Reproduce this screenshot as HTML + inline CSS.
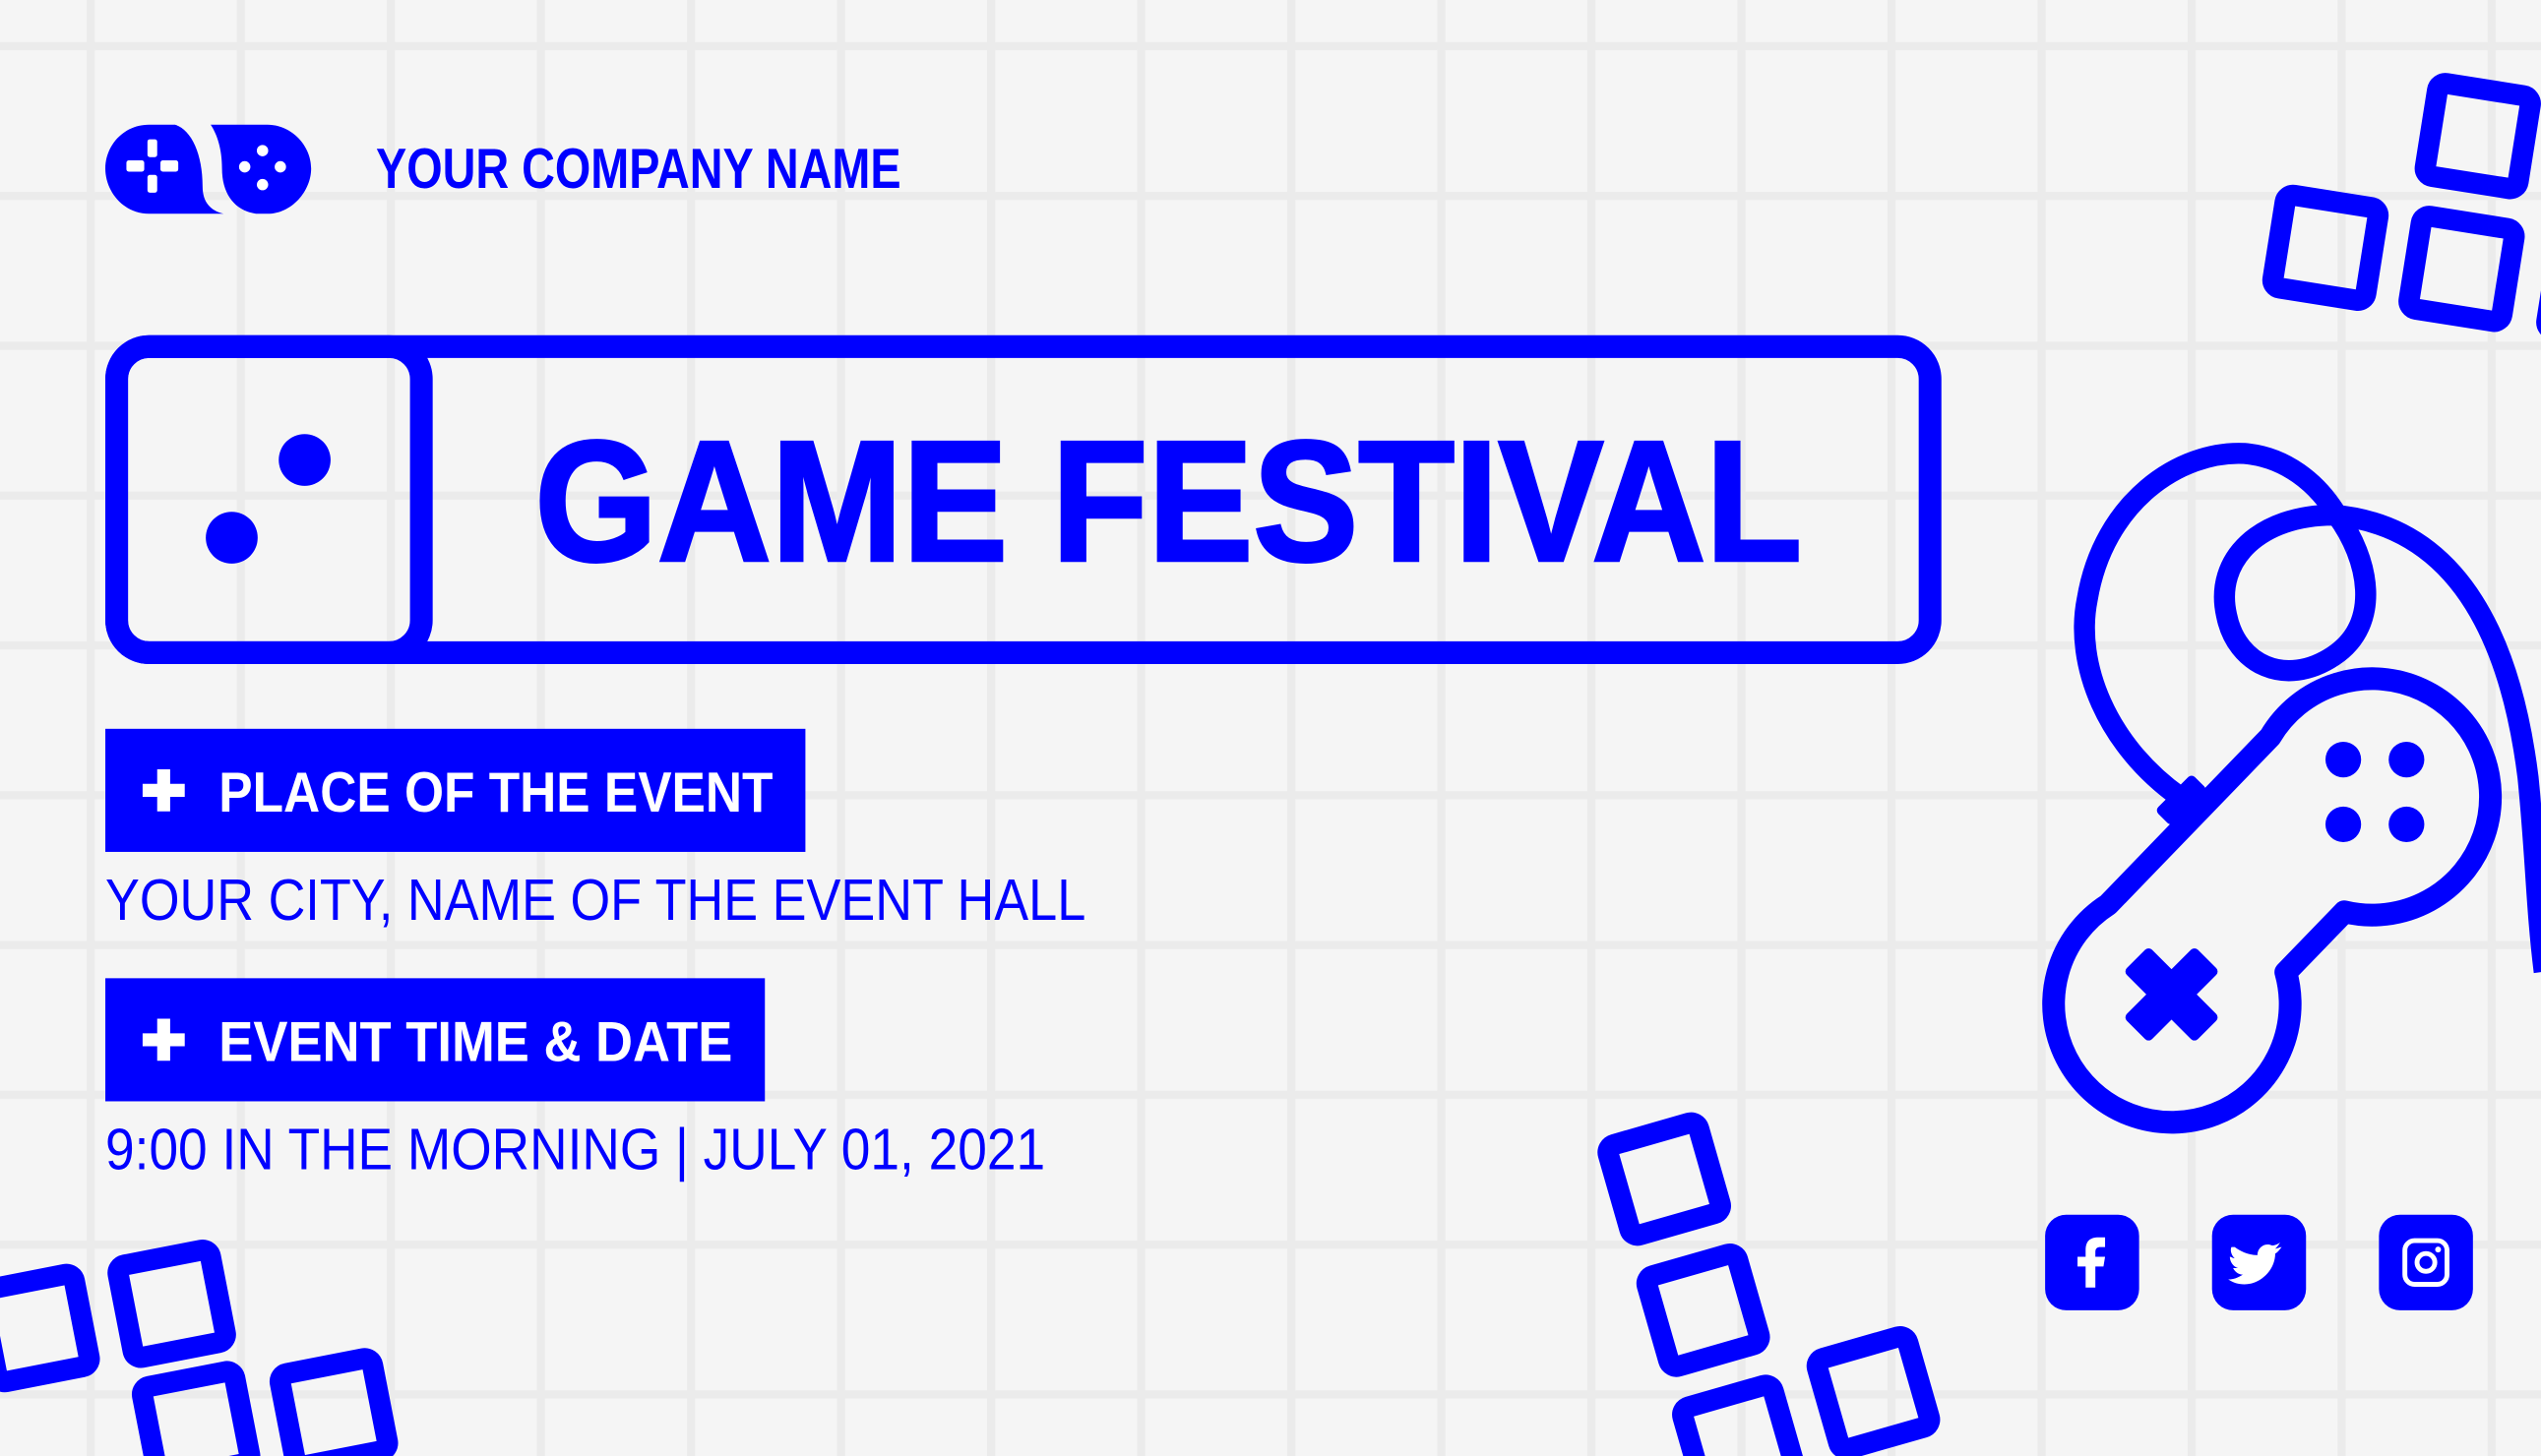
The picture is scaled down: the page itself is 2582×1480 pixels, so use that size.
<!DOCTYPE html>
<html><head><meta charset="utf-8"><style>
html,body{margin:0;padding:0;background:#f5f5f5;}
svg{display:block;}
</style></head><body>
<svg width="2582" height="1480" viewBox="0 0 1568 899" preserveAspectRatio="none" xmlns="http://www.w3.org/2000/svg">
<defs>
<pattern id="g" x="0" y="0" width="92.6" height="92.5" patternUnits="userSpaceOnUse" patternTransform="translate(53.5,26)">
<rect width="92.6" height="92.5" fill="#f5f5f5"/>
<rect x="0" y="0" width="5" height="92.5" fill="#ebebeb"/>
<rect x="0" y="0" width="92.6" height="5" fill="#ebebeb"/>
</pattern>
<rect id="sq" x="-29" y="-29" width="58" height="58" rx="5" fill="none" stroke="#0000ff" stroke-width="13"/>
</defs>
<rect width="1568" height="899" fill="url(#g)"/>

<!-- logo -->
<g fill="#0000ff">
<path d="M92,77 L108,77 C118,80 125,95 125,115 C125,125 130,130 138,132 L92,132 C76,132 65,118 65,104 C65,90 76,77 92,77 Z"/>
<path d="M130,77 L165,77 C180,77 192,90 192,104 C192,118 180,132 165,132 L158,132 C145,130 137,120 137,104 C137,92 134,83 130,77 Z"/>
</g>
<g fill="#fff">
<rect x="91" y="86" width="6" height="11" rx="1.5"/><rect x="91" y="108" width="6" height="11" rx="1.5"/>
<rect x="78" y="99" width="11" height="7" rx="1.5"/><rect x="99" y="99" width="11" height="7" rx="1.5"/>
<circle cx="162" cy="93" r="3.5"/><circle cx="162" cy="114" r="3.5"/><circle cx="151" cy="103" r="3.5"/><circle cx="173" cy="103" r="3.5"/>
</g>
<text x="232" y="116" font-family="Liberation Sans, sans-serif" font-weight="bold" font-size="35" fill="#0000ff" textLength="324" lengthAdjust="spacingAndGlyphs">YOUR COMPANY NAME</text>

<!-- main box -->
<rect x="72" y="214" width="1119" height="189" rx="20" fill="none" stroke="#0000ff" stroke-width="14"/>
<rect x="72" y="214" width="188" height="189" rx="20" fill="none" stroke="#0000ff" stroke-width="14"/>
<circle cx="188" cy="284" r="16" fill="#0000ff"/>
<circle cx="143" cy="332" r="16" fill="#0000ff"/>
<text x="330" y="346" font-family="Liberation Sans, sans-serif" font-weight="bold" font-size="106" fill="#0000ff" stroke="#0000ff" stroke-width="2" textLength="782" lengthAdjust="spacingAndGlyphs">GAME FESTIVAL</text>

<!-- place -->
<rect x="65" y="450" width="432" height="76" fill="#0000ff"/>
<path d="M97,475 h8 v9 h9 v8 h-9 v9 h-8 v-9 h-9 v-8 h9 z" fill="#fff"/>
<text x="135" y="501" font-family="Liberation Sans, sans-serif" font-weight="bold" font-size="35" fill="#fff" textLength="342" lengthAdjust="spacingAndGlyphs">PLACE OF THE EVENT</text>
<text x="65" y="568" font-family="Liberation Sans, sans-serif" font-size="36" fill="#0000ff" textLength="605" lengthAdjust="spacingAndGlyphs">YOUR CITY, NAME OF THE EVENT HALL</text>

<rect x="65" y="604" width="407" height="76" fill="#0000ff"/>
<path d="M97,629 h8 v9 h9 v8 h-9 v9 h-8 v-9 h-9 v-8 h9 z" fill="#fff"/>
<text x="135" y="655" font-family="Liberation Sans, sans-serif" font-weight="bold" font-size="35" fill="#fff" textLength="317" lengthAdjust="spacingAndGlyphs">EVENT TIME &amp; DATE</text>
<text x="65" y="722" font-family="Liberation Sans, sans-serif" font-size="36" fill="#0000ff" textLength="580" lengthAdjust="spacingAndGlyphs">9:00 IN THE MORNING | JULY 01, 2021</text>

<!-- cable -->
<path d="M1345,492 C1300,460 1280,410 1288,370 C1298,310 1345,278 1385,280 C1410,282 1430,298 1442,318 C1462,345 1470,385 1440,405 C1410,425 1380,410 1374,380 C1366,345 1395,318 1440,318 C1520,325 1550,400 1560,480 C1565,530 1565,560 1570,600" fill="none" stroke="#0000ff" stroke-width="13"/>

<!-- controller -->
<g transform="translate(1402,556) rotate(-46)">
<path d="M-72,-71 L72,-71 A73,73 0 1 1 26,37 L-26,37 A73,73 0 1 1 -72,-71 Z" fill="#f5f5f5" stroke="#0000ff" stroke-width="14" stroke-linejoin="round"/>
</g>
<rect x="-16" y="-7" width="32" height="14" rx="3" fill="#0000ff" transform="translate(1346,494) rotate(-45)"/>
<g fill="#0000ff">
<circle cx="1446" cy="469" r="11"/><circle cx="1485" cy="469" r="11"/>
<circle cx="1446" cy="509" r="11"/><circle cx="1485" cy="509" r="11"/>
<g transform="translate(1340,614) rotate(45)">
<rect x="-31" y="-11" width="62" height="22" rx="3"/><rect x="-11" y="-31" width="22" height="62" rx="3"/>
</g>
</g>

<!-- social -->
<g fill="#0000ff">
<rect x="1262" y="750" width="58" height="59" rx="13"/>
<rect x="1365" y="750" width="58" height="59" rx="13"/>
<rect x="1468" y="750" width="58" height="59" rx="13"/>
</g>
<path d="M1287,795 v-13 h-5 v-6 h5 v-4 c0,-6 3,-8 8,-8 h4 v6 h-3 c-2,0 -3,1 -3,3 v3 h6 l-1,6 h-5 v13 z" fill="#fff"/>
<path d="M1379,770 c4,3 9,5 14,5 c0,-5 5,-8 9,-6 c2,0 4,-1 5,-2 c-1,2 -2,3 -3,4 c1,0 3,-1 4,-1 c-1,1 -2,3 -4,4 c0,10 -9,19 -19,19 c-4,0 -7,-1 -10,-3 c3,0 6,-1 9,-3 c-3,0 -5,-2 -6,-4 h3 c-3,-1 -5,-4 -5,-7 c1,0 2,1 3,1 c-2,-2 -3,-5 -2,-7 z" fill="#fff"/>
<rect x="1484" y="766" width="26" height="27" rx="6" fill="none" stroke="#fff" stroke-width="3"/>
<circle cx="1497" cy="779.5" r="5.5" fill="none" stroke="#fff" stroke-width="3"/>
<circle cx="1504.5" cy="771.5" r="1.8" fill="#fff"/>

<!-- tetris top right -->
<use href="#sq" transform="translate(1529,84) rotate(9)"/>
<use href="#sq" transform="translate(1435,153) rotate(9)"/>
<use href="#sq" transform="translate(1519,166) rotate(9)"/>
<use href="#sq" transform="translate(1604,179) rotate(9)"/>
<!-- tetris bottom center -->
<use href="#sq" transform="translate(1027,728) rotate(-16)"/>
<use href="#sq" transform="translate(1051,809) rotate(-16)"/>
<use href="#sq" transform="translate(1073,890) rotate(-16)"/>
<use href="#sq" transform="translate(1156,860) rotate(-16)"/>
<!-- tetris bottom left -->
<use href="#sq" transform="translate(22,820) rotate(-11)"/>
<use href="#sq" transform="translate(106,805) rotate(-11)"/>
<use href="#sq" transform="translate(121,880) rotate(-11)"/>
<use href="#sq" transform="translate(206,872) rotate(-11)"/>
</svg>
</body></html>
